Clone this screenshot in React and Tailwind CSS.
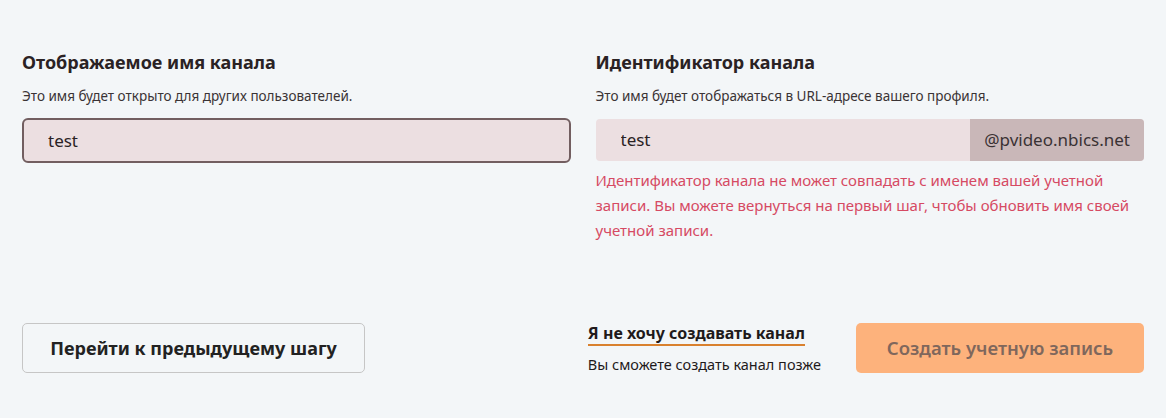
import React, { useState } from 'react'

export default function App() {
    const [name, setName] = useState('test')
    const [handle, setHandle] = useState('test')

    return (
        <div className="min-h-[418px] w-full bg-[#f3f6f8] text-[#2a2224] font-['Noto_Sans',sans-serif]">
            <div className="px-[22px] pt-[51px]">
                {/* Fields */}
                <div className="grid grid-cols-2 gap-[25px]">
                    <div>
                        <h2 className="text-[18px] font-bold leading-[22px]">Отображаемое имя канала</h2>
                        <p className="mt-[14px] text-[13.5px] leading-[18px] text-[#3a3335]">
                            Это имя будет открыто для других пользователей.
                        </p>
                        <input
                            value={name}
                            onChange={(e) => setName(e.target.value)}
                            className="mt-[13px] h-[45px] w-full rounded-[6px] border-2 border-[#725e60] bg-[#ecdfe1] px-[24px] text-[17px] text-[#2a2224] outline-none"
                        />
                    </div>
                    <div>
                        <h2 className="text-[18px] font-bold leading-[22px]">Идентификатор канала</h2>
                        <p className="mt-[14px] text-[13.5px] leading-[18px] text-[#3a3335]">
                            Это имя будет отображаться в URL-адресе вашего профиля.
                        </p>
                        <div className="mt-[14px] flex h-[42px] overflow-hidden rounded-[4px] bg-[#ecdfe1]">
                            <input
                                value={handle}
                                onChange={(e) => setHandle(e.target.value)}
                                className="min-w-0 flex-1 bg-transparent px-[25px] text-[17px] text-[#2a2224] outline-none"
                            />
                            <span className="flex items-center bg-[#c9b7b8] px-[14px] text-[17px] text-[#3a3234]">
                                @pvideo.nbics.net
                            </span>
                        </div>
                        <p className="mt-[7px] text-[15px] leading-[25px] text-[#d64a63]">
                            Идентификатор канала не может совпадать с именем вашей учетной записи. Вы можете вернуться на первый шаг, чтобы обновить имя своей учетной записи.
                        </p>
                    </div>
                </div>

                {/* Actions */}
                <div className="mt-[80px] flex items-center">
                    <button className="h-[50px] w-[343px] rounded-[5px] border border-[#c6c6c6] text-[18px] font-bold text-[#222]">
                        Перейти к предыдущему шагу
                    </button>
                    <div className="ml-auto flex items-center">
                        <div className="flex flex-col">
                            <button className="self-start border-b-2 border-[#d9812f] pb-[1px] text-[16px] font-bold leading-[20px] text-[#1f1a1b]">
                                Я не хочу создавать канал
                            </button>
                            <span className="mt-[9px] text-[14.5px] leading-[18px] text-[#1f1a1b]">
                                Вы сможете создать канал позже
                            </span>
                        </div>
                        <button className="ml-[35px] h-[50px] w-[288px] rounded-[5px] bg-[#fdb27c] text-[18.5px] font-semibold text-[#7f675c]">
                            Создать учетную запись
                        </button>
                    </div>
                </div>
            </div>
        </div>
    )
}
